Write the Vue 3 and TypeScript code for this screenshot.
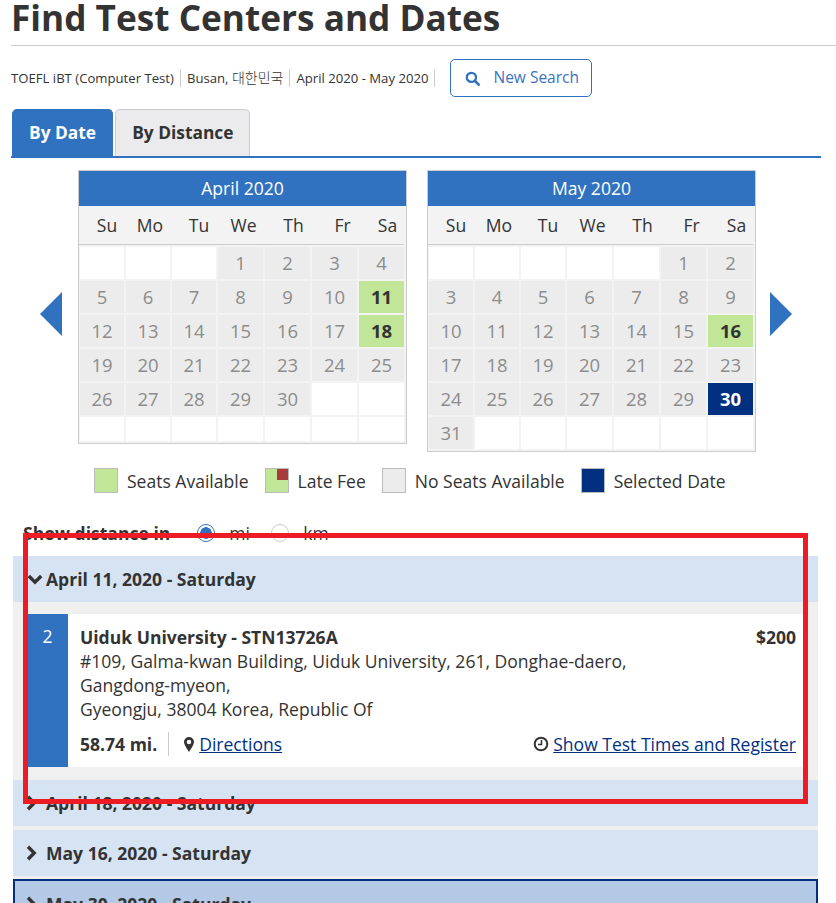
<template>
  <div class="page">
    <h1 class="title">Find Test Centers and Dates</h1>

    <div class="summary">
      <span class="summary-item">TOEFL iBT (Computer Test)</span>
      <span class="summary-item">Busan, <span class="ko">대한민국</span></span>
      <span class="summary-item">April 2020 - May 2020</span>
      <button class="new-search">
        <svg class="search-icon" viewBox="0 0 16 16">
          <circle cx="6.8" cy="6.8" r="4.9" fill="none" stroke="currentColor" stroke-width="2.4" />
          <path d="M10.4 10.4 14.6 14.6" stroke="currentColor" stroke-width="2.8" stroke-linecap="round" />
        </svg>
        <span class="new-search-text">New Search</span>
      </button>
    </div>

    <div class="tabs">
      <div class="tab active">By Date</div>
      <div class="tab">By Distance</div>
    </div>

    <div class="calendars">
      <svg class="arrow" viewBox="0 0 22 44"><polygon points="0,22 22,0 22,44" /></svg>
      <div v-for="cal in calendars" :key="cal.name" class="calendar" :class="{ short: cal.short }">
        <div class="cal-title">{{ cal.name }}</div>
        <div class="cal-days">
          <span v-for="d in dayNames" :key="d">{{ d }}</span>
        </div>
        <div class="cal-grid">
          <div v-for="(cell, i) in cal.cells" :key="i" class="cell" :class="cell.type">{{ cell.day }}</div>
        </div>
      </div>
      <svg class="arrow right" viewBox="0 0 22 44"><polygon points="22,22 0,0 0,44" /></svg>
    </div>

    <div class="legend">
      <div class="legend-item"><i class="swatch seats"></i>Seats Available</div>
      <div class="legend-item"><i class="swatch seats late"></i>Late Fee</div>
      <div class="legend-item"><i class="swatch none"></i>No Seats Available</div>
      <div class="legend-item"><i class="swatch selected"></i>Selected Date</div>
    </div>

    <div class="distance">
      <b>Show distance in</b>
      <span class="radio checked"></span><span class="radio-label">mi</span>
      <span class="radio"></span><span class="radio-label">km</span>
    </div>

    <div class="accordion">
      <div class="acc-head open">
        <svg class="chevron" viewBox="0 0 16 16">
          <path d="M1.800 5 8 11.200 14.200 5" fill="none" stroke="currentColor" stroke-width="3.400" />
        </svg>
        April 11, 2020 - Saturday
      </div>
      <div class="acc-panel">
        <div class="site">
          <div class="site-num">2</div>
          <div class="site-body">
            <div class="site-top">
              <b>Uiduk University - STN13726A</b>
              <b>$200</b>
            </div>
            <div class="site-addr">
              #109, Galma-kwan Building, Uiduk University, 261, Donghae-daero,<br />
              Gangdong-myeon,<br />
              Gyeongju, 38004 Korea, Republic Of
            </div>
            <div class="site-foot">
              <b class="miles">58.74 mi.</b>
              <svg class="pin" viewBox="0 0 10 15">
                <path
                  fill-rule="evenodd"
                  d="M5 0a5 5 0 0 1 5 5c0 2.600-3.400 7.600-5 10C3.400 12.600 0 7.600 0 5a5 5 0 0 1 5-5Zm0 2.700a2.300 2.300 0 1 0 0 4.600 2.300 2.300 0 0 0 0-4.600Z"
                />
              </svg>
              <a class="link">Directions</a>
              <svg class="clock" viewBox="0 0 16 16">
                <circle cx="8" cy="8" r="6.300" fill="none" stroke="currentColor" stroke-width="2" />
                <path d="M8.500 4v4.500H5" fill="none" stroke="currentColor" stroke-width="1.500" />
              </svg>
              <a class="link">Show Test Times and Register</a>
            </div>
          </div>
        </div>
      </div>
      <div v-for="row in closedRows" :key="row.label" class="acc-head closed" :class="{ current: row.current }">
        <svg class="chevron" viewBox="0 0 14 16">
          <path d="M3 1.800 9.200 8 3 14.200" fill="none" stroke="currentColor" stroke-width="3.400" />
        </svg>
        {{ row.label }}
      </div>
    </div>

    <div class="annotation"></div>
  </div>
</template>

<script setup lang="ts">
interface Cell {
  day: number | "";
  type: string;
}

const dayNames = ["Su", "Mo", "Tu", "We", "Th", "Fr", "Sa"];

const buildCells = (lead: number, count: number, open: number[], selected: number[]): Cell[] => {
  const cells: Cell[] = [];
  for (let i = 0; i < lead; i++) cells.push({ day: "", type: "empty" });
  for (let d = 1; d <= count; d++) {
    let type = "full";
    if (open.includes(d)) type = "open";
    if (selected.includes(d)) type = "selected";
    cells.push({ day: d, type });
  }
  while (cells.length < 42) cells.push({ day: "", type: "empty" });
  return cells;
};

const calendars = [
  { name: "April 2020", short: true, cells: buildCells(3, 30, [11, 18], []) },
  { name: "May 2020", short: false, cells: buildCells(5, 31, [16], [30]) },
];

const closedRows = [
  { label: "April 18, 2020 - Saturday", current: false },
  { label: "May 16, 2020 - Saturday", current: false },
  { label: "May 30, 2020 - Saturday", current: true },
];
</script>

<style>
html,
body {
  margin: 0;
  background: #fff;
  overflow: hidden;
}
</style>

<style scoped>
.page {
  position: relative;
  height: 903px;
  overflow: hidden;
  font-family: "Open Sans", "Noto Sans CJK KR", sans-serif;
  font-size: 17.55px;
  color: #333;
}

.title {
  margin: 0 0 0 11px;
  height: 45px;
  line-height: 34px;
  font-size: 35.2px;
  font-weight: 700;
  color: #333;
  border-bottom: 1px solid #ccc;
  box-sizing: content-box;
}

.summary {
  display: flex;
  align-items: center;
  margin: 13px 0 0 11px;
  height: 38px;
  font-size: 13.15px;
}

.summary-item {
  padding-right: 6px;
  margin-right: 6px;
  border-right: 1px solid #ccc;
  line-height: 18px;
}

.ko {
  font-size: 14px;
  font-weight: 300;
}

.new-search {
  display: flex;
  align-items: center;
  width: 142px;
  height: 38px;
  margin-left: 9px;
  padding: 0 0 0 14px;
  box-sizing: border-box;
  background: #fff;
  border: 1px solid #3072bf;
  border-radius: 5px;
  color: #3a72bf;
  font: inherit;
  font-size: 15.5px;
}

.new-search-text {
  padding-bottom: 2px;
}

.search-icon {
  width: 15px;
  height: 15px;
  margin-right: 13px;
  color: #3072bf;
}

.tabs {
  display: flex;
  gap: 2px;
  margin: 12px 15px 0 11px;
  height: 47px;
  border-bottom: 2px solid #3072bf;
  box-sizing: content-box;
  padding-left: 1px;
  font-size: 17.35px;
}

.tab {
  height: 47px;
  box-sizing: border-box;
  padding: 0 16px;
  line-height: 45px;
  font-weight: 700;
  background: #ebebee;
  border: 1px solid #ccc;
  border-bottom: none;
  border-radius: 5px 5px 0 0;
}

.tab.active {
  background: #3072bf;
  border-color: #3072bf;
  color: #fff;
}

.calendars {
  display: flex;
  align-items: flex-start;
  margin-top: 12px;
  padding-left: 40px;
  height: 282px;
}

.arrow {
  width: 22px;
  height: 44px;
  margin: 122px 16px 0 0;
  fill: #3072bf;
  flex: none;
}

.arrow.right {
  margin: 122px 0 0 14px;
}

.calendar {
  width: 329px;
  box-sizing: border-box;
  border: 1px solid #ccc;
  background: #f3f3f3;
  flex: none;
}

.calendar + .calendar {
  margin-left: 20px;
}

.cal-title {
  height: 35px;
  line-height: 34px;
  text-align: center;
  color: #fff;
  background: #3072bf;
}

.cal-days,
.cal-grid {
  display: grid;
  grid-template-columns: 44px 44px 44px 45px 45px 45px 45px;
  column-gap: 2px;
  padding-left: 1px;
}

.cal-days {
  height: 38px;
  line-height: 38px;
  text-align: center;
  margin-right: 2px;
  border-bottom: 1px solid #ccc;
}

.cal-days span:nth-child(1) { padding-left: 10px; }
.cal-days span:nth-child(2) { padding-left: 4px; }
.cal-days span:nth-child(3) { padding-left: 10px; }
.cal-days span:nth-child(4) { padding-left: 6px; }
.cal-days span:nth-child(5) { padding-left: 12px; }
.cal-days span:nth-child(6) { padding-left: 16px; }
.cal-days span:nth-child(7) { padding-left: 12px; }

.cal-grid {
  grid-template-rows: repeat(6, 32px);
  row-gap: 2px;
  padding-top: 2px;
  padding-bottom: 2px;
}

.short .cal-grid {
  grid-template-rows: repeat(5, 32px) 24px;
}

.cell {
  line-height: 32px;
  text-align: center;
  font-size: 18.5px;
}

.cell.empty { background: #fff; }
.cell.full { background: #ececec; color: #8c8c8c; }
.cell.open { background: #c1e698; color: #333; font-weight: 700; }
.cell.selected { background: #00307f; color: #fff; font-weight: 700; }

.legend {
  display: flex;
  margin: 16px 0 0 94px;
  height: 25px;
}

.legend-item {
  display: flex;
  align-items: flex-start;
  margin-right: 16px;
  line-height: 27px;
}

.swatch {
  position: relative;
  display: block;
  width: 24px;
  height: 25px;
  box-sizing: border-box;
  margin-right: 9px;
  border: 1px solid #bbb;
}

.swatch.seats { background: #c1e698; }
.swatch.none { background: #ececec; }
.swatch.selected { background: #00307f; }

.swatch.late::after {
  content: "";
  position: absolute;
  top: 0;
  right: 0;
  width: 11px;
  height: 11px;
  background: #a83c3c;
}

.distance {
  display: flex;
  align-items: center;
  margin: 28px 0 0 23px;
  height: 24px;
}

.radio {
  width: 18px;
  height: 18px;
  box-sizing: border-box;
  border: 1px solid #ccc;
  border-radius: 50%;
  background: #fff;
}

.radio.checked {
  margin-left: 27px;
  border-color: #3072bf;
  background: radial-gradient(circle, #3072bf 0 5.5px, #fff 6px);
}

.radio-label {
  margin: 0 22px 0 14px;
  width: 20px;
}

.accordion {
  margin: 11px 18px 0 13px;
  background: #f0f0f0;
}

.acc-head {
  display: flex;
  align-items: center;
  height: 46px;
  padding-left: 12px;
  font-weight: 700;
  background: #d6e3f3;
}

.acc-head.closed {
  margin-bottom: 4px;
}

.acc-head.current {
  margin-top: -1px;
  background: #b3c9e6;
  border: 2px solid #00307f;
  padding-left: 10px;
}

.chevron {
  width: 14px;
  height: 16px;
  margin-right: 7px;
  color: #333;
}

.acc-head.open {
  padding-left: 14px;
}

.open .chevron {
  width: 16px;
  margin-right: 3px;
}

.acc-panel {
  padding: 12px 14px 13px;
}

.site {
  display: flex;
  height: 153px;
  background: #fff;
}

.site-num {
  width: 41px;
  padding-top: 10px;
  box-sizing: border-box;
  text-align: center;
  color: #fff;
  background: #3072bf;
  flex: none;
}

.site-body {
  flex: 1;
  padding: 12px 8px 0 12px;
}

.site-top {
  display: flex;
  justify-content: space-between;
  line-height: 23px;
}

.site-addr {
  line-height: 24px;
}

.site-foot {
  display: flex;
  align-items: center;
  margin-top: 11px;
  height: 24px;
}

.miles {
  padding-right: 11px;
  margin-right: 15px;
  border-right: 1px solid #ccc;
}

.pin {
  width: 10px;
  height: 15px;
  margin-right: 5px;
  fill: #333;
}

.clock {
  width: 16px;
  height: 16px;
  margin: 0 4px 0 auto;
  color: #333;
}

.link {
  color: #00307f;
  text-decoration: underline;
}

.annotation {
  position: absolute;
  left: 23px;
  top: 533px;
  width: 785px;
  height: 271px;
  box-sizing: border-box;
  border: 5px solid #ed1c24;
  pointer-events: none;
}
</style>
